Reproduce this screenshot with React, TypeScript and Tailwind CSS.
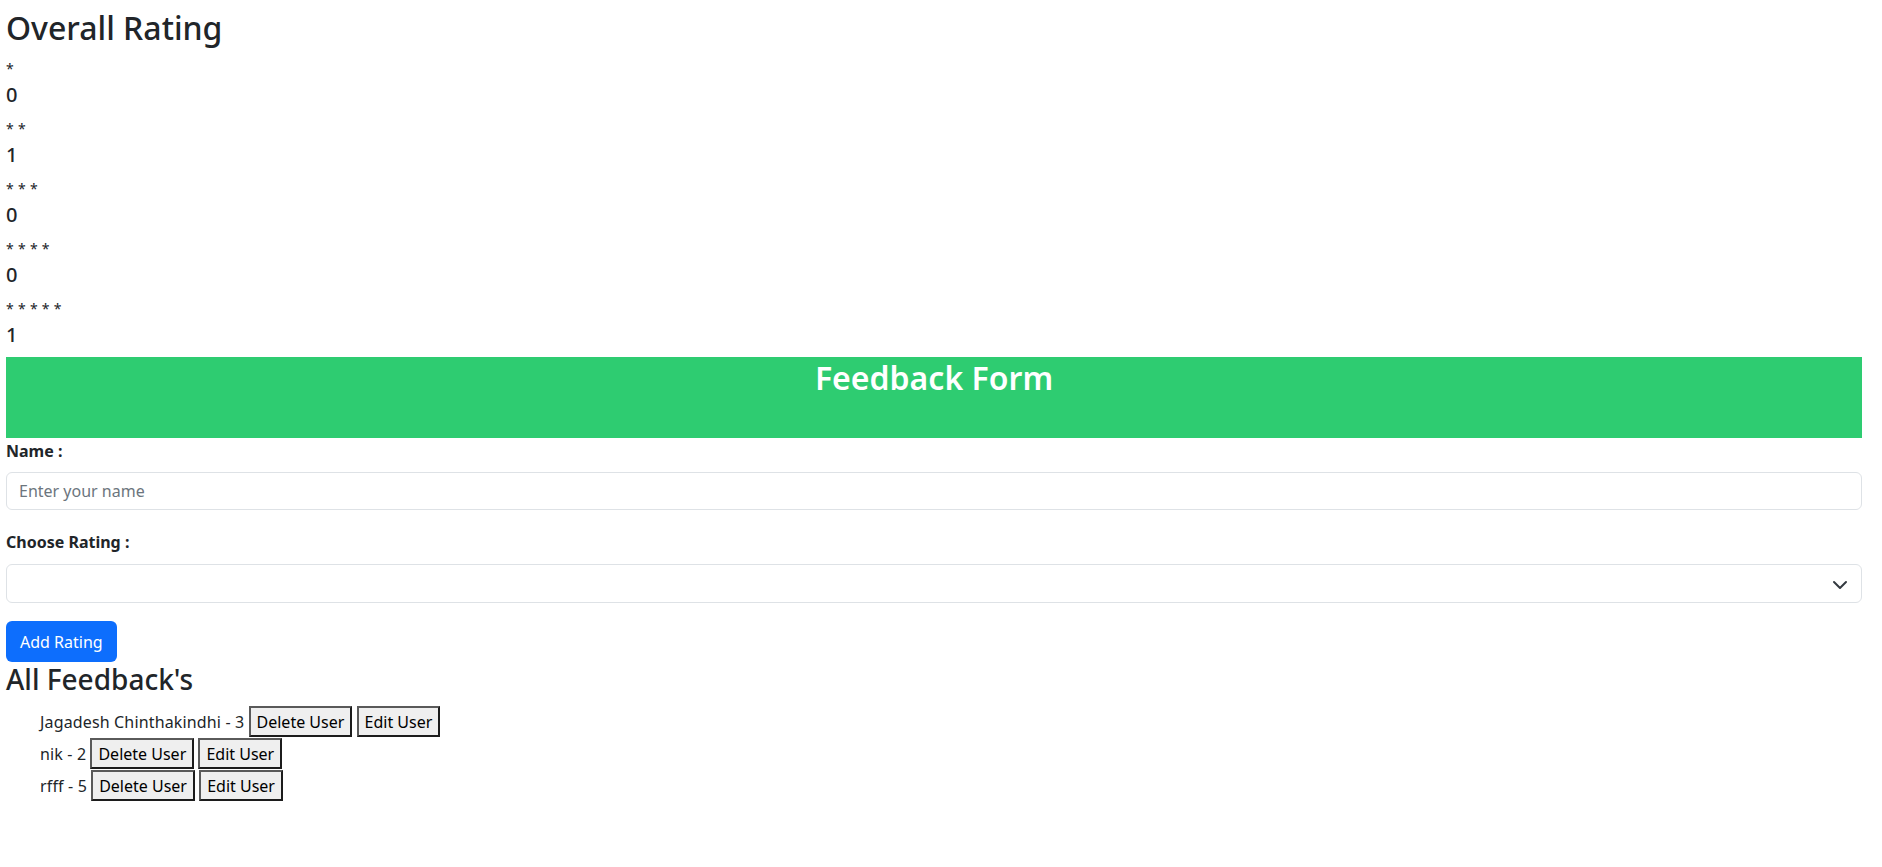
import { useState } from "react";

interface Feedback {
    id: number;
    name: string;
    rating: number;
}

const initialFeedback: Feedback[] = [
    { id: 1, name: "Jagadesh Chinthakindhi", rating: 3 },
    { id: 2, name: "nik", rating: 2 },
    { id: 3, name: "rfff", rating: 5 },
];

// summary as shown on the page
const summary = [
    { stars: "*", count: 0 },
    { stars: "* *", count: 1 },
    { stars: "* * *", count: 0 },
    { stars: "* * * *", count: 0 },
    { stars: "* * * * *", count: 1 },
];

export default function App() {
    const [feedback, setFeedback] = useState<Feedback[]>(initialFeedback);
    const [name, setName] = useState("");
    const [rating, setRating] = useState("");

    const addRating = () => {
        if (!name || !rating) return;
        setFeedback([...feedback, { id: Date.now(), name, rating: Number(rating) }]);
        setName("");
        setRating("");
    };

    return (
        <div className="min-h-screen bg-white pl-[6px] pr-[20px] pt-[9px] text-[#212529] font-['Noto_Sans',sans-serif]">
            <h2 className="text-[32px] font-medium leading-[38px] mb-[10px]">Overall Rating</h2>

            {/* rating summary */}
            {summary.map((s) => (
                <div key={s.stars} className="h-[60px]">
                    <p className="text-[14px] leading-[24px] h-[24px] tracking-[0.3px]">{s.stars}</p>
                    <h5 className="text-[20px] font-medium leading-[28px]">{s.count}</h5>
                </div>
            ))}

            <div className="bg-[#2ecc71] h-[81px] pt-[2px]">
                <h2 className="text-center text-white text-[32px] font-semibold leading-[38px]">Feedback Form</h2>
            </div>

            <label className="block font-bold text-[16px] leading-[24px] h-[24px] mt-[1px] mb-[9px]">Name :</label>
            <input
                value={name}
                onChange={(e) => setName(e.target.value)}
                placeholder="Enter your name"
                className="block w-full h-[38px] px-[12px] text-[16px] border border-[#dee2e6] rounded-[6px] outline-none placeholder:text-[#6c757d]"
            />

            <label className="block font-bold text-[16px] leading-[24px] h-[24px] mt-[20px] mb-[10px]">Choose Rating :</label>
            <div className="relative">
                <select
                    value={rating}
                    onChange={(e) => setRating(e.target.value)}
                    className="block w-full h-[39px] px-[12px] text-[16px] border border-[#dee2e6] rounded-[6px] appearance-none bg-white outline-none"
                >
                    <option value=""></option>
                    <option value="1">1</option>
                    <option value="2">2</option>
                    <option value="3">3</option>
                    <option value="4">4</option>
                    <option value="5">5</option>
                </select>
                <svg className="absolute right-[14px] top-[13px] pointer-events-none" width="16" height="16" viewBox="0 0 16 16" fill="none">
                    <path d="M2 5l6 6 6-6" stroke="#343a40" strokeWidth="2" strokeLinecap="round" strokeLinejoin="round" />
                </svg>
            </div>

            <button
                onClick={addRating}
                className="mt-[18px] h-[41px] px-[14px] rounded-[6px] bg-[#0d6efd] text-white text-[16px] leading-[24px]"
            >
                Add Rating
            </button>

            <h3 className="text-[28px] font-medium leading-[34px] mb-[10px]">All Feedback's</h3>
            <ul className="pl-[34px]">
                {feedback.map((f) => (
                    <li key={f.id} className="text-[16px] leading-[24px] h-[32px]">
                        <span className="tracking-[0.15px]">{f.name} - {f.rating}</span>{" "}
                        <button
                            onClick={() => setFeedback(feedback.filter((x) => x.id !== f.id))}
                            className="h-[31px] px-[6px] bg-[#efefef] border-2 border-t-[#5a5a5a] border-l-[#5a5a5a] border-b-[#1c1c1c] border-r-[#1c1c1c] text-black"
                        >
                            Delete User
                        </button>{" "}
                        <button className="h-[31px] px-[6px] bg-[#efefef] border-2 border-t-[#5a5a5a] border-l-[#5a5a5a] border-b-[#1c1c1c] border-r-[#1c1c1c] text-black">
                            Edit User
                        </button>
                    </li>
                ))}
            </ul>
        </div>
    );
}
